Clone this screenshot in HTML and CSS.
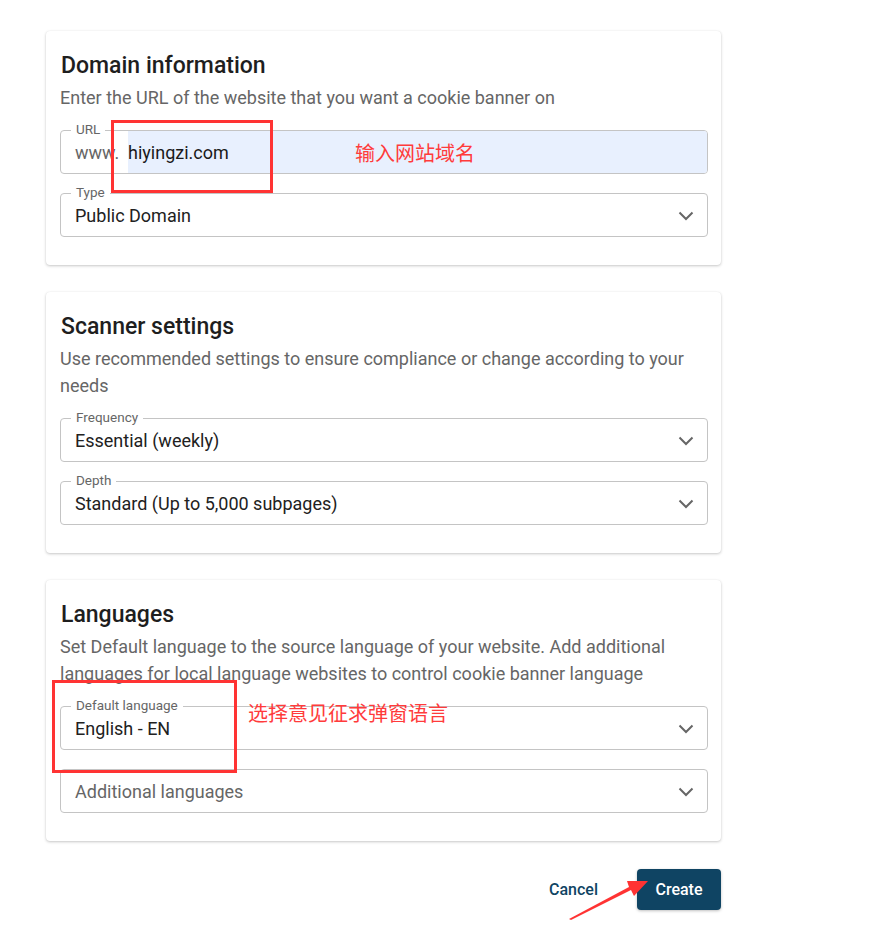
FILE: index.html
```html
<!DOCTYPE html>
<html>
<head>
<meta charset="utf-8">
<link rel="stylesheet" href="styles.css">
</head>
<body>
<div class="page">
  <section class="card">
    <h2 class="card-title">Domain information</h2>
    <p class="card-sub">Enter the URL of the website that you want a cookie banner on</p>
    <div class="fields">
      <div class="field">
        <span class="field-label">URL</span>
        <span class="prefix">www.</span>
        <span class="autofill">hiyingzi.com</span>
      </div>
      <div class="field">
        <span class="field-label">Type</span>
        <span class="value">Public Domain</span>
        <svg class="chev" viewBox="0 0 16 10"><path d="M1.5 1.5 L8 8 L14.5 1.5"/></svg>
      </div>
    </div>
  </section>

  <section class="card">
    <h2 class="card-title">Scanner settings</h2>
    <p class="card-sub">Use recommended settings to ensure compliance or change according to your needs</p>
    <div class="fields">
      <div class="field">
        <span class="field-label">Frequency</span>
        <span class="value">Essential (weekly)</span>
        <svg class="chev" viewBox="0 0 16 10"><path d="M1.5 1.5 L8 8 L14.5 1.5"/></svg>
      </div>
      <div class="field">
        <span class="field-label">Depth</span>
        <span class="value">Standard (Up to 5,000 subpages)</span>
        <svg class="chev" viewBox="0 0 16 10"><path d="M1.5 1.5 L8 8 L14.5 1.5"/></svg>
      </div>
    </div>
  </section>

  <section class="card">
    <h2 class="card-title">Languages</h2>
    <p class="card-sub">Set Default language to the source language of your website. Add additional languages for local language websites to control cookie banner language</p>
    <div class="fields">
      <div class="field">
        <span class="field-label">Default language</span>
        <span class="value">English - EN</span>
        <svg class="chev" viewBox="0 0 16 10"><path d="M1.5 1.5 L8 8 L14.5 1.5"/></svg>
      </div>
      <div class="field">
        <span class="value placeholder">Additional languages</span>
        <svg class="chev" viewBox="0 0 16 10"><path d="M1.5 1.5 L8 8 L14.5 1.5"/></svg>
      </div>
    </div>
  </section>

  <div class="actions">
    <button class="btn-text">Cancel</button>
    <button class="btn-primary">Create</button>
  </div>

  <div class="mark mark-url"></div>
  <div class="note note-url">输入网站域名</div>
  <div class="mark mark-lang"></div>
  <div class="note note-lang">选择意见征求弹窗语言</div>
  <svg class="arrow" viewBox="0 0 90 50"><polygon points="1,49 61,17 59,11 80,11 66,26 63,20 3,50" /></svg>
</div>
</body>
</html>
```

FILE: styles.css
```css
* { box-sizing: border-box; }
html, body { margin: 0; padding: 0; background: #fff; }
body {
  font-family: Roboto, "Noto Sans", "Liberation Sans", sans-serif;
  color: #212121;
}
.page {
  position: relative;
  width: 873px;
  height: 937px;
  padding: 31px 0 0 46px;
  overflow: hidden;
}
.card {
  width: 675px;
  background: #fff;
  border-radius: 4px;
  box-shadow: 0 1px 3px rgba(0,0,0,0.22), 0 0 1px rgba(0,0,0,0.08);
  padding: 21px 13px 28px 14px;
  margin-bottom: 27px;
}
.card-title {
  margin: 0 0 0 1px;
  font-size: 23px;
  line-height: 28px;
  font-weight: 500;
  color: #1e1e1e;
}
.card-sub {
  margin: 4px 0 0 0;
  font-size: 18px;
  line-height: 27px;
  color: #666;
}
.fields {
  margin-top: 19px;
  display: flex;
  flex-direction: column;
  gap: 19px;
}
.field {
  position: relative;
  height: 44px;
  border: 1px solid #c4c4c4;
  border-radius: 4px;
  display: flex;
  align-items: center;
  padding: 0 0 0 14px;
  font-size: 18px;
}
.field-label {
  position: absolute;
  left: 10px;
  top: -11px;
  padding: 0 5px;
  background: #fff;
  font-size: 13.5px;
  line-height: 18px;
  color: #666;
}
.value { color: #212121; }
.placeholder { color: #666; }
.prefix { color: #666; width: 53px; flex: none; }
.autofill {
  align-self: stretch;
  flex: 1;
  background: #e8f0fe;
  display: flex;
  align-items: center;
  border-radius: 0 3px 3px 0;
  color: #1a1a1a;
}
.chev {
  position: absolute;
  right: 13px;
  top: 17px;
  width: 16px;
  height: 10px;
  fill: none;
  stroke: #666;
  stroke-width: 2;
}
.actions {
  width: 675px;
  display: flex;
  justify-content: flex-end;
  align-items: center;
  gap: 31px;
  margin-top: 28px;
}
.btn-text, .btn-primary {
  font-family: Roboto, "Liberation Sans", sans-serif;
  font-size: 16px;
  font-weight: 500;
  border: 0;
  border-radius: 4px;
  height: 41px;
}
.btn-text {
  background: transparent;
  color: #0f4463;
  padding: 0 8px;
}
.btn-primary {
  background: #0f4463;
  color: #fff;
  width: 84px;
  box-shadow: 0 1px 3px rgba(0,0,0,0.25);
}
.mark {
  position: absolute;
  border: 3px solid #ff3333;
}
.mark-url { left: 111px; top: 120px; width: 162px; height: 73px; }
.mark-lang { left: 52px; top: 680px; width: 185px; height: 93px; }
.note {
  position: absolute;
  font-family: "Noto Sans CJK SC", sans-serif;
  font-size: 20px;
  line-height: 24px;
  color: #ff3b3b;
}
.note-url { left: 355px; top: 141px; }
.note-lang { left: 248px; top: 701px; }
.arrow {
  position: absolute;
  left: 568px;
  top: 870px;
  width: 90px;
  height: 50px;
  fill: #ff3333;
}
```
